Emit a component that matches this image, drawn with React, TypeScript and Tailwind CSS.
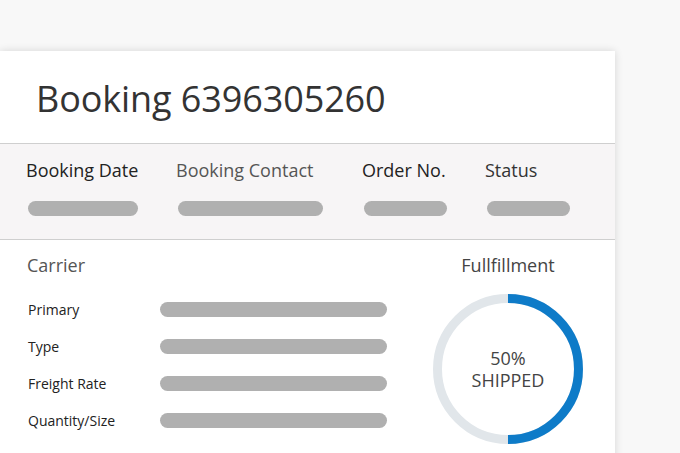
const infoCols = [
  { label: "Booking Date", w: "w-[150px]", bar: "w-[110px]", tone: "text-[#222]" },
  { label: "Booking Contact", w: "w-[186px]", bar: "w-[145px]", tone: "text-[#555]" },
  { label: "Order No.", w: "w-[123px]", bar: "w-[83px]", tone: "text-[#222]" },
  { label: "Status", w: "w-[100px]", bar: "w-[83px]", tone: "text-[#333]" },
];

const carrierRows = ["Primary", "Type", "Freight Rate", "Quantity/Size"];

function Bar({ className }: { className: string }) {
  return <div className={`h-[15px] rounded-full bg-[#b0b0b0] ${className}`} />;
}

function Donut() {
  return (
    <div className="relative h-[150px] w-[150px]">
      <svg width="150" height="150" viewBox="0 0 150 150">
        <circle cx="75" cy="75" r="70.5" fill="none" stroke="#e1e6ea" strokeWidth="9" />
        <path d="M 75 4.5 A 70.5 70.5 0 0 1 75 145.5" fill="none" stroke="#0e7bc8" strokeWidth="9" />
      </svg>
      <div className="absolute inset-0 flex flex-col items-center justify-center text-[18px] leading-[22px] text-[#444]">
        <span>50%</span>
        <span>SHIPPED</span>
      </div>
    </div>
  );
}

export default function App() {
  return (
    <div
      className="min-h-screen bg-[#f8f8f8] pt-[51px]"
      style={{ fontFamily: '"Open Sans", "Noto Sans", sans-serif' }}
    >
      <div className="w-[615px] bg-white pb-[30px] shadow-[0_0_8px_rgba(0,0,0,0.14)]">
        <div className="flex h-[93px] items-center border-b border-[#cfcfcf] pl-[36px] pt-[4px]">
          <h1 className="text-[36px] leading-[48px] tracking-[-0.1px] text-[#333]">Booking 6396305260</h1>
        </div>

        <div className="flex border-b border-[#cfcfcf] bg-[#f7f5f6] pl-[26px] pt-[14px] pb-[23px]">
          {infoCols.map((c) => (
            <div key={c.label} className={c.w}>
              <p className={`text-[18px] leading-[24px] ${c.tone}`}>{c.label}</p>
              <Bar className={`mt-[19px] ml-[2px] ${c.bar}`} />
            </div>
          ))}
        </div>

        <div className="flex pt-[13px]">
          <div className="w-[401px] pl-[27px]">
            <p className="text-[18px] leading-[24px] text-[#555]">Carrier</p>
            <div className="mt-[14px] flex flex-col">
              {carrierRows.map((r) => (
                <div key={r} className="flex h-[37px] items-center">
                  <span className="w-[133px] pl-[1px] text-[14px] text-[#222]">{r}</span>
                  <Bar className="w-[227px]" />
                </div>
              ))}
            </div>
          </div>
          <div className="flex flex-1 flex-col items-center">
            <p className="text-[18px] leading-[24px] text-[#444]">Fullfillment</p>
            <div className="mt-[17px]">
              <Donut />
            </div>
          </div>
        </div>
      </div>
    </div>
  );
}
